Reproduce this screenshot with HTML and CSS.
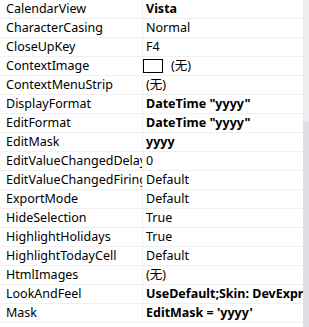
FILE: index.html
```html
<!DOCTYPE html>
<html lang="zh">
<head>
  <meta charset="UTF-8">
  <title>Properties</title>
  <link rel="stylesheet" href="styles.css">
</head>
<body>
  <div class="grid-wrap">
    <div class="props">
      <div class="row"><div class="name">CalendarView</div><div class="value bold">Vista</div></div>
      <div class="row"><div class="name">CharacterCasing</div><div class="value">Normal</div></div>
      <div class="row"><div class="name">CloseUpKey</div><div class="value">F4</div></div>
      <div class="row"><div class="name">ContextImage</div><div class="value"><span class="img-box"></span><span>(无)</span></div></div>
      <div class="row"><div class="name">ContextMenuStrip</div><div class="value">(无)</div></div>
      <div class="row"><div class="name">DisplayFormat</div><div class="value bold">DateTime "yyyy"</div></div>
      <div class="row"><div class="name">EditFormat</div><div class="value bold">DateTime "yyyy"</div></div>
      <div class="row"><div class="name">EditMask</div><div class="value bold">yyyy</div></div>
      <div class="row"><div class="name">EditValueChangedDelay</div><div class="value">0</div></div>
      <div class="row"><div class="name">EditValueChangedFiringMode</div><div class="value">Default</div></div>
      <div class="row"><div class="name">ExportMode</div><div class="value">Default</div></div>
      <div class="row"><div class="name">HideSelection</div><div class="value">True</div></div>
      <div class="row"><div class="name">HighlightHolidays</div><div class="value">True</div></div>
      <div class="row"><div class="name">HighlightTodayCell</div><div class="value">Default</div></div>
      <div class="row"><div class="name">HtmlImages</div><div class="value">(无)</div></div>
      <div class="row"><div class="name">LookAndFeel</div><div class="value bold">UseDefault;Skin: DevExpress Style</div></div>
      <div class="row"><div class="name">Mask</div><div class="value bold">EditMask = 'yyyy'</div></div>
      <div class="row"></div>
    </div>
    <div class="scrollbar"><div class="thumb"></div></div>
  </div>
</body>
</html>
```
FILE: styles.css
```css
body {
  margin: 0;
  background: #fff;
  font-family: "Noto Sans", "Noto Sans CJK SC", sans-serif;
  font-size: 12.5px;
  color: #000;
  overflow: hidden;
}
.grid-wrap {
  display: flex;
  height: 327px;
  overflow: hidden;
}
.props {
  flex: 1;
  min-width: 0;
  overflow: hidden;
}
.row {
  display: grid;
  grid-template-columns: 143px 1fr;
  height: 19px;
  border-bottom: 1px solid #f0f0f0;
  box-sizing: border-box;
}
.name, .value {
  white-space: nowrap;
  overflow: hidden;
  line-height: 18px;
}
.name {
  padding-left: 6px;
  border-right: 1px solid #f0f0f0;
}
.value {
  padding-left: 3px;
  display: flex;
  align-items: center;
  gap: 8px;
}
.bold {
  font-weight: bold;
}
.img-box {
  width: 18px;
  height: 12px;
  border: 1px solid #000;
  background: #fff;
  margin-left: -3px;
}
.scrollbar {
  width: 6px;
  background: #ededf0;
  display: flex;
  flex-direction: column;
  padding-top: 122px;
}
.thumb {
  flex: 1;
  background: #dfdfe3;
}
```
